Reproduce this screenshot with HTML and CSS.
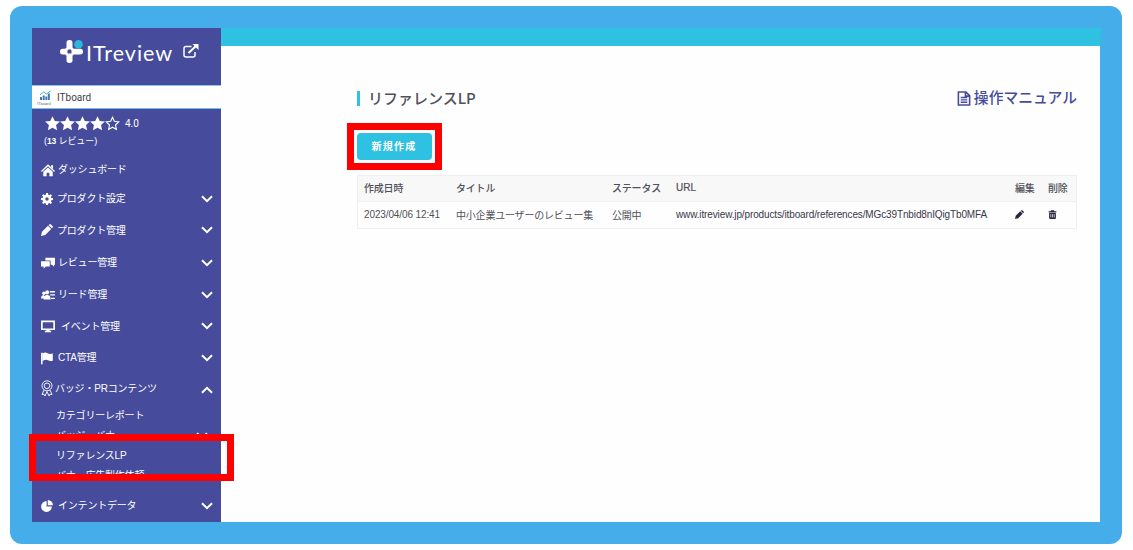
FILE: index.html
```html
<!DOCTYPE html>
<html lang="ja">
<head>
<meta charset="utf-8">
<title>リファレンスLP | ITreview</title>
<link rel="stylesheet" href="styles.css">
</head>
<body>
<svg class="defs" aria-hidden="true">
  <symbol id="star" viewBox="0 0 16 16"><path d="M8 .2l2.400 5 5.500.6-4.100 3.800 1.100 5.500L8 12.400l-4.900 2.700 1.100-5.500L.1 5.800l5.500-.6z"/></symbol>
  <symbol id="star-empty" viewBox="0 0 16 16"><path d="M8 1.400l2 4.300 4.700.6-3.500 3.300.9 4.700L8 12l-4.100 2.300.9-4.700L1.300 6.300 6 5.700z"/></symbol>
  <symbol id="down" viewBox="0 0 12 8"><path d="M1 1.200l5 5 5-5" fill="none" stroke="currentColor" stroke-width="2"/></symbol>
  <symbol id="up" viewBox="0 0 12 8"><path d="M1 6.800l5-5 5 5" fill="none" stroke="currentColor" stroke-width="2"/></symbol>
  <symbol id="pencil" viewBox="0 0 16 16"><path d="M0 16l1.300-5.600L9.300 2.400l4.300 4.300-8 8zM10.200 1.500l.8-.8q1.100-1.100 2.200 0l2.100 2.100q1.100 1.100 0 2.200l-.8.800z"/></symbol>
</svg>
<div class="frame">
  <div class="app">
    <div class="sidebar">
      <div class="logo">
        <svg class="logo-mark" viewBox="0 0 23 23">
          <g fill="#fff"><rect x="6.500" y="0" width="6" height="10" rx="2.700"/><rect x="6.500" y="13" width="6" height="10" rx="2.700"/><rect x="0" y="8.700" width="9" height="5.800" rx="2.700"/><rect x="11" y="8.700" width="12" height="5.800" rx="2.700"/><rect x="5.500" y="7.700" width="8" height="7.800" rx="1"/></g>
          <rect x="7.500" y="9.600" width="4" height="4" rx="1.200" fill="#464c9b"/>
          <circle cx="18.500" cy="4.300" r="4.300" fill="#2cb8d8"/>
        </svg>
        <span class="logo-text">ITreview</span>
        <svg class="logo-link" viewBox="0 0 16 14"><path d="M8.500 2.500H3Q1 2.500 1 4.500V11Q1 13 3 13H10Q12 13 12 11V8" fill="none" stroke="#fff" stroke-width="1.500"/><path d="M5.500 9L13 2" stroke="#fff" stroke-width="2"/><path d="M9.500 0H15.500V6z" fill="#fff"/></svg>
      </div>
      <div class="product">
        <svg class="product-icon" viewBox="0 0 16 15"><g fill="#3b78b5"><path d="M3 7h2v3H3zM5.700 5.500h2V10h-2zM8.400 6.500h1.800V10H8.400zM10.800 3.500h2V10h-2z"/></g><path d="M3 5l3.500-3 3 2 4-3" fill="none" stroke="#37b8c9"/><text x="0" y="14.500" class="tiny">ITboard</text></svg>
        <span>ITboard</span>
      </div>
      <div class="rating">
        <svg><use href="#star"/></svg><svg><use href="#star"/></svg><svg><use href="#star"/></svg><svg><use href="#star"/></svg><svg class="empty"><use href="#star-empty"/></svg>
        <span class="score">4.0</span>
      </div>
      <div class="reviews">(<b>13</b> レビュー)</div>

      <div class="menu">
        <div class="item home">
          <svg class="icon" viewBox="0 0 16 16"><path d="M8 1.500L16 9l-1 1.200-7-6.400-7 6.400L0 9zM11.500 2.500h2.300v4l-2.300-2zM2.600 10L8 5l5.400 5v5H9.600v-4H6.400v4H2.600z"/></svg>
          <span class="label">ダッシュボード</span>
        </div>
        <div class="item settings">
          <svg class="icon gear" viewBox="0 0 16 16"><path fill-rule="evenodd" d="M6.700 0h2.600l.4 2.300 1.400.6L13 1.500 14.700 3.200 13.200 5l.6 1.500 2.200.3v2.500l-2.200.3-.6 1.500 1.500 1.800-1.800 1.800-1.800-1.400-1.400.6-.4 2.100H6.700l-.4-2.100-1.400-.6-1.800 1.400-1.800-1.800 1.500-1.800-.6-1.500L0 9.300V6.800l2.200-.3L2.800 5 1.300 3.200 3 1.500l1.900 1.400 1.400-.6zM8 5.700a2.300 2.300 0 1 0 0 4.600 2.300 2.300 0 0 0 0-4.600z"/></svg>
          <span class="label">プロダクト設定</span>
          <svg class="arrow"><use href="#down"/></svg>
        </div>
        <div class="item manage">
          <svg class="icon gear"><use href="#pencil"/></svg>
          <span class="label">プロダクト管理</span>
          <svg class="arrow"><use href="#down"/></svg>
        </div>
        <div class="item">
          <svg class="icon" viewBox="0 0 16 16"><path d="M5 2h11v8h-1v2.200L12.500 10H11V5H5z"/><path d="M0 6h10v6H5.500L3 14.500V12H0z"/></svg>
          <span class="label">レビュー管理</span>
          <svg class="arrow"><use href="#down"/></svg>
        </div>
        <div class="item">
          <svg class="icon" viewBox="0 0 16 16"><circle cx="3.300" cy="6" r="1.900"/><circle cx="7" cy="5" r="2.300"/><path d="M0 12q0-4 3.500-4L4 12zM3 13q0-5 4-5t4 5zM10 3.500h6V5h-6zM10.500 7H16v1.500h-5.500zM11.500 11H16v1.500h-4.500z"/></svg>
          <span class="label">リード管理</span>
          <svg class="arrow"><use href="#down"/></svg>
        </div>
        <div class="item event">
          <svg class="icon" viewBox="0 0 16 16"><path d="M1 2.700h14v9H1z" fill="none" stroke="currentColor" stroke-width="1.900"/><path d="M6 12h4v1.500h1.500V15h-7v-1.500H6z"/></svg>
          <span class="label">イベント管理</span>
          <svg class="arrow"><use href="#down"/></svg>
        </div>
        <div class="item">
          <svg class="icon" viewBox="0 0 16 16"><path d="M0 2h1.800v13H0zM2 2.500q3-1.500 5.500 0t6 .3V11q-3 1.200-5.500-.3T2 11.300z"/></svg>
          <span class="label">CTA管理</span>
          <svg class="arrow"><use href="#down"/></svg>
        </div>
        <div class="item badge">
          <svg class="icon medal" viewBox="0 0 12 17"><g fill="none" stroke="currentColor" stroke-width=".9"><circle cx="6" cy="5.800" r="5"/><circle cx="6" cy="5.800" r="2.800"/><path d="M3 10l-2 4.500 2-.3 1 1.800 2-4.500 2 4.500 1-1.800 2 .3L9 10"/></g></svg>
          <span class="label">バッジ・PRコンテンツ</span>
          <svg class="arrow"><use href="#up"/></svg>
        </div>
        <div class="submenu">
          <div class="subitem"><span>カテゴリーレポート</span></div>
          <div class="subitem"><span>バッジ・バナー</span><svg class="arrow small"><use href="#down"/></svg></div>
          <div class="subitem"><span>リファレンスLP</span></div>
          <div class="subitem"><span>バナー広告製作依頼</span></div>
        </div>
        <div class="item intent">
          <svg class="icon pie" viewBox="0 0 16 16"><path d="M7.500 1.500v7h7a7.200 7.200 0 1 1-7-7z"/><path d="M9 0a7 7 0 0 1 7 7H9z"/></svg>
          <span class="label">インテントデータ</span>
          <svg class="arrow"><use href="#down"/></svg>
        </div>
      </div>
    </div>

    <div class="main">
      <div class="topbar"></div>
      <div class="content">
        <div class="heading">
          <h1>リファレンスLP</h1>
          <div class="manual">
            <svg viewBox="0 0 14 16"><path d="M1 1h8l4 4v10H1zM8.500 1v4.500H13" fill="none" stroke="currentColor" stroke-width="1.700"/><path d="M3.500 7h7M3.500 9.500h7M3.500 12h7" stroke="currentColor" stroke-width="1.500"/></svg>
            <span>操作マニュアル</span>
          </div>
        </div>
        <button class="create">新規作成</button>
        <div class="table">
          <div class="row head">
            <span>作成日時</span><span>タイトル</span><span>ステータス</span><span class="latin">URL</span><span>編集</span><span>削除</span>
          </div>
          <div class="row">
            <span class="date">2023/04/06 12:41</span><span>中小企業ユーザーのレビュー集</span><span>公開中</span><span class="url">www.itreview.jp/products/itboard/references/MGc39Tnbid8nIQigTb0MFA</span>
            <span><svg class="action"><use href="#pencil"/></svg></span>
            <span><svg class="action" viewBox="0 0 16 16"><path fill-rule="evenodd" d="M5 2V.5h6V2h4v2H1V2zM2 5h12v9q0 2-2 2H4q-2 0-2-2zm2.500 2v6.500h1.200V7zm2.900 0v6.500h1.200V7zm2.900 0v6.500h1.200V7z"/></svg></span>
          </div>
        </div>
      </div>
    </div>
  </div>
</div>
<div class="mark mark-create"></div>
<div class="mark mark-menu"></div>
</body>
</html>
```
FILE: styles.css
```css
* {
  box-sizing: border-box;
}

body {
  margin: 0;
  padding: 6px 11px 6px 10px;
  height: 550px;
  overflow: hidden;
  background: #fff;
  color: #50505a;
  font-family: "Liberation Sans", "Noto Sans CJK JP", sans-serif;
  font-size: 10px;
  letter-spacing: -0.2px;
}

svg {
  display: block;
  flex: none;
  fill: currentColor;
}

.defs {
  position: absolute;
  width: 0;
  height: 0;
}

.frame {
  height: 538px;
  padding: 22px;
  border-radius: 12px;
  background: #45adea;
}

.app {
  display: flex;
  height: 494px;
  background: #fefefe;
}

/* sidebar */
.sidebar {
  width: 189px;
  flex: none;
  overflow: hidden;
  background: #464c9b;
  color: #fff;
}

.logo {
  display: flex;
  height: 57px;
  padding: 12px 0 0 28px;
}

.logo-mark {
  width: 23px;
  height: 23px;
}

.logo-text {
  width: 87px;
  margin-left: 3px;
  font: 21.5px/26px Lato, sans-serif;
  letter-spacing: 1px;
  white-space: nowrap;
}

.logo-link {
  width: 16px;
  height: 14px;
  margin: 4px 0 0 10px;
}

.product {
  display: flex;
  align-items: center;
  height: 24px;
  padding-left: 5px;
  border-top: 1px solid #8ec5ee;
  border-bottom: 1px solid #72bdeb;
  background: #fff;
  color: #40404c;
  font: 10px Roboto, sans-serif;
  letter-spacing: 0;
}

.product-icon {
  width: 16px;
  height: 15px;
  margin-right: 4px;
}

.tiny {
  font-size: 4px;
  fill: #59718e;
}

.rating {
  display: flex;
  align-items: center;
  height: 28px;
  padding-left: 13px;
}

.rating svg {
  width: 15px;
  height: 15px;
}

.rating .empty {
  fill: none;
  stroke: #fff;
  stroke-width: 1.2px;
}

.score {
  margin-left: 5px;
  font: 10px Roboto, sans-serif;
  letter-spacing: 0;
}

.reviews {
  height: 18px;
  padding-left: 12px;
  font-size: 9px;
  line-height: 9px;
  letter-spacing: -0.1px;
}

.reviews b {
  font-size: 8.5px;
}

.item {
  display: flex;
  align-items: center;
  height: 31.7px;
  padding: 0 8px 0 9px;
  white-space: nowrap;
}

.label {
  padding-bottom: 2px;
}

.item.home {
  height: 29px;
}

.item.settings {
  height: 29px;
}

.item.manage {
  height: 34px;
}

.icon {
  width: 14px;
  height: 14px;
  margin-right: 3px;
}

.icon.gear {
  width: 12px;
  height: 12px;
  margin-right: 4px;
}

.event .icon {
  margin-right: 6px;
}

.icon.medal {
  width: 12px;
  height: 17px;
  margin-right: 2px;
}

.icon.pie {
  width: 12px;
  height: 12px;
  margin-right: 5px;
}

.arrow {
  width: 12px;
  height: 8px;
  margin-left: auto;
}

.item.badge {
  height: 30px;
}

.badge .arrow {
  margin-top: 3px;
}

.submenu {
  height: 86px;
  padding: 1px 12px 0 24px;
}

.subitem {
  display: flex;
  align-items: center;
  height: 20px;
  white-space: nowrap;
}

.arrow.small {
  width: 14px;
  height: 8px;
  margin-top: 3px;
}

/* page */
.main {
  flex: 1;
}

.topbar {
  height: 18px;
  background: #2fc1e2;
}

.content {
  padding: 41px 24px 0 136px;
}

.heading {
  display: flex;
  justify-content: space-between;
  height: 46px;
}

h1 {
  height: 15px;
  margin: 4px 0 0;
  padding-left: 8px;
  border-left: 3px solid #2fc1e2;
  font: 500 15px/13px "Noto Sans CJK JP", sans-serif;
  letter-spacing: 0;
}

.manual {
  display: flex;
  align-items: center;
  height: 22px;
  color: #464c9b;
  font-size: 14.8px;
  font-weight: 500;
  letter-spacing: 0;
}

.manual span {
  padding-bottom: 3px;
}

.manual svg {
  width: 14px;
  height: 15px;
  margin-right: 3px;
}

.create {
  display: block;
  width: 75px;
  height: 27px;
  padding: 0 1px 2px 0;
  border: 0;
  border-radius: 4px;
  background: #2fc1e2;
  color: #fff;
  font: bold 10px "Noto Sans CJK JP", sans-serif;
  letter-spacing: 1.2px;
}

.table {
  width: 720px;
  margin-top: 15px;
  border: 1px solid #efeff0;
}

.row {
  display: grid;
  grid-template-columns: 92px 156px 64px 339px 33px 28px;
  align-items: center;
  height: 26px;
  padding: 0 0 2px 6px;
  white-space: nowrap;
}

.row.head {
  border-bottom: 1px solid #efeff0;
  background: #f8f8f8;
  font-weight: 500;
}

.latin {
  letter-spacing: 0;
  -webkit-text-stroke: 0.2px;
}

.date {
  letter-spacing: -0.12px;
}

.action {
  width: 9px;
  height: 9px;
  color: #29253f;
}

.url {
  color: #39364d;
  letter-spacing: -0.13px;
}

/* highlight boxes over the screen */
.mark {
  position: absolute;
  border: 7px solid #f00;
}

.mark-create {
  left: 347px;
  top: 123px;
  width: 95px;
  height: 47px;
}

.mark-menu {
  left: 29px;
  top: 434px;
  width: 205px;
  height: 47px;
}
```
